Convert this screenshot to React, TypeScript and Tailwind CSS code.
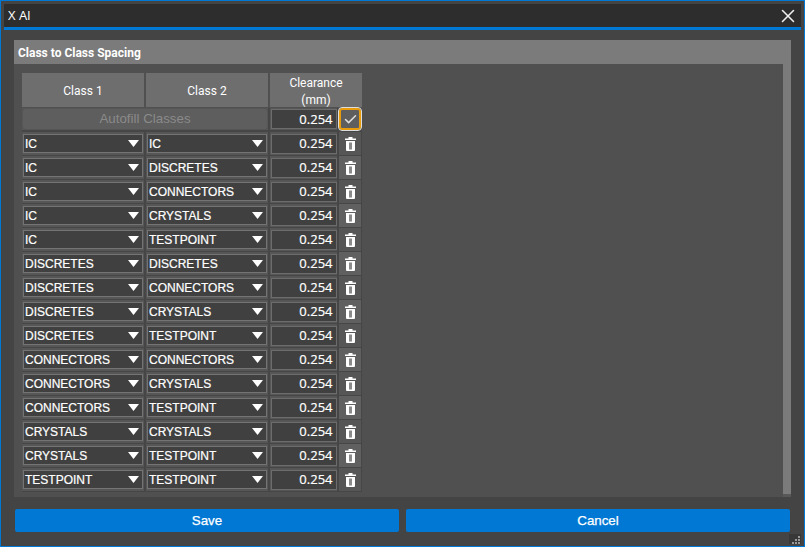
import { X, Check } from "lucide-react";

const rows = [
  ["IC", "IC"],
  ["IC", "DISCRETES"],
  ["IC", "CONNECTORS"],
  ["IC", "CRYSTALS"],
  ["IC", "TESTPOINT"],
  ["DISCRETES", "DISCRETES"],
  ["DISCRETES", "CONNECTORS"],
  ["DISCRETES", "CRYSTALS"],
  ["DISCRETES", "TESTPOINT"],
  ["CONNECTORS", "CONNECTORS"],
  ["CONNECTORS", "CRYSTALS"],
  ["CONNECTORS", "TESTPOINT"],
  ["CRYSTALS", "CRYSTALS"],
  ["CRYSTALS", "TESTPOINT"],
  ["TESTPOINT", "TESTPOINT"],
];

function Select({ value }: { value: string }) {
  return (
    <div className="flex h-[19px] w-[120px] items-center justify-between border border-[#747474] bg-[#404040] pl-[1px] pr-[3px] text-[12px] leading-none text-white [-webkit-text-stroke:0.2px_white]">
      <span>{value}</span>
      <svg width="11" height="7" viewBox="0 0 11 7" className="shrink-0">
        <path d="M0 0h11L5.5 7z" fill="#fff" />
      </svg>
    </div>
  );
}

function Trash() {
  return (
    <svg width="11" height="14" viewBox="0 0 11 14">
      <path d="M3.5 0h4v1.5h3.5v1.5H0V1.5h3.5z" fill="#fff" />
      <path d="M1 4h9v9a1 1 0 0 1-1 1H2a1 1 0 0 1-1-1z" fill="#fff" />
      <rect x="4" y="5.5" width="3" height="7" fill="#8a8a8a" />
    </svg>
  );
}

function Clearance() {
  return (
    <div className="flex h-[20px] w-[66px] items-center justify-end border border-[#6c6c6c] bg-[#404040] pr-[3px] font-['Open_Sans',sans-serif] text-[13px] leading-none text-white [-webkit-text-stroke:0.2px_white]">
      0.254
    </div>
  );
}

export default function App() {
  return (
    <div className="relative flex h-[547px] w-[805px] flex-col border border-[#0078d4] bg-[#444444] p-[3px] font-['Liberation_Sans',sans-serif]">
      <div className="flex h-[26px] shrink-0 items-center justify-between border-b-[3px] border-[#0078d4] bg-[#2d2d2d] pl-[4px] pr-[2px] font-['Open_Sans',sans-serif] text-[13px] text-white">
        <span>X AI</span>
        <X size={22} strokeWidth={1.7} className="text-[#eeeeee]" />
      </div>

      <div className="flex flex-1 flex-col px-[10px] pt-[10px]">
        <div className="flex h-[457px] flex-col bg-[#7b7b7b]">
          <div className="flex h-[24px] shrink-0 items-center pl-[4px] pt-[1px] font-['Roboto',sans-serif] text-[12px] font-bold text-white">
            Class to Class Spacing
          </div>
          <div className="flex flex-1">
            <div className="flex-1 bg-[#505050] pl-[8px] pt-[9px]">
              <div className="flex w-[340px] gap-[2px] pb-[1px]">
                {["Class 1", "Class 2"].map((c) => (
                  <div key={c} className="flex h-[34px] w-[122px] items-center justify-center bg-[#6e6e6e] pt-[1px] font-['Roboto',sans-serif] text-[12px] text-white">
                    {c}
                  </div>
                ))}
                <div className="flex h-[34px] w-[92px] items-center justify-center bg-[#6e6e6e] pt-[3px] text-center font-['Roboto',sans-serif] text-[12px] leading-[17px] text-white">
                  Clearance
                  <br />
                  (mm)
                </div>
              </div>

              <div className="flex h-[24px] w-[340px] gap-[2px] bg-[#464646] pb-[2px]">
                <div className="flex w-[246px] items-center bg-[#565656] pl-[1px]">
                  <div className="flex h-[20px] w-[244px] items-center justify-center rounded-[3px] bg-[#5e5e5e] text-[13.33px] text-[#8a8a8a]">
                    Autofill Classes
                  </div>
                </div>
                <div className="flex w-[67px] items-center justify-center bg-[#565656]">
                  <Clearance />
                </div>
                <div className="flex w-[22px] items-center justify-center">
                  <div className="flex h-[22px] w-[22px] items-center justify-center rounded-[3px] border-2 border-[#e89c0c] bg-[#5e5e5e] outline outline-1 outline-[#dddddd]">
                    <Check size={15} strokeWidth={2.4} className="text-[#dddddd]" />
                  </div>
                </div>
              </div>

              {rows.map(([a, b], i) => (
                <div key={i} className="flex h-[24px] w-[340px] gap-[2px] bg-[#464646] pb-[1px]">
                  <div className="flex w-[122px] items-center justify-center bg-[#565656]">
                    <Select value={a} />
                  </div>
                  <div className="flex w-[122px] items-center justify-center bg-[#565656]">
                    <Select value={b} />
                  </div>
                  <div className="flex w-[67px] items-center justify-center bg-[#565656]">
                    <Clearance />
                  </div>
                  <div className={i % 2 === 0 ? "flex w-[22px] items-center justify-center bg-[#565656]" : "flex w-[22px] items-center justify-center bg-[#606060]"}>
                    <Trash />
                  </div>
                </div>
              ))}
            </div>
            <div className="flex w-[8px] flex-col">
              <div className="flex-1" />
              <div className="h-[3px] bg-[#585858]" />
            </div>
          </div>
        </div>

        <div className="mt-[12px] flex gap-[7px] px-[1px]">
          {["Save", "Cancel"].map((b) => (
            <div key={b} className="flex h-[23px] w-[384px] items-center justify-center rounded-[2px] bg-[#0078d4] text-[13.33px] text-white [-webkit-text-stroke:0.25px_white]">
              {b}
            </div>
          ))}
        </div>
      </div>

      <div className="absolute bottom-[2px] right-[3px] flex h-[10px] w-[12px] items-end justify-end bg-[#383838]">
        <svg width="10" height="9" viewBox="0 0 10 9" fill="#999999">
          <rect x="7" y="1" width="2" height="2" />
          <rect x="4" y="4" width="2" height="2" />
          <rect x="7" y="4" width="2" height="2" />
          <rect x="1" y="7" width="2" height="2" />
          <rect x="4" y="7" width="2" height="2" />
          <rect x="7" y="7" width="2" height="2" />
        </svg>
      </div>
    </div>
  );
}
